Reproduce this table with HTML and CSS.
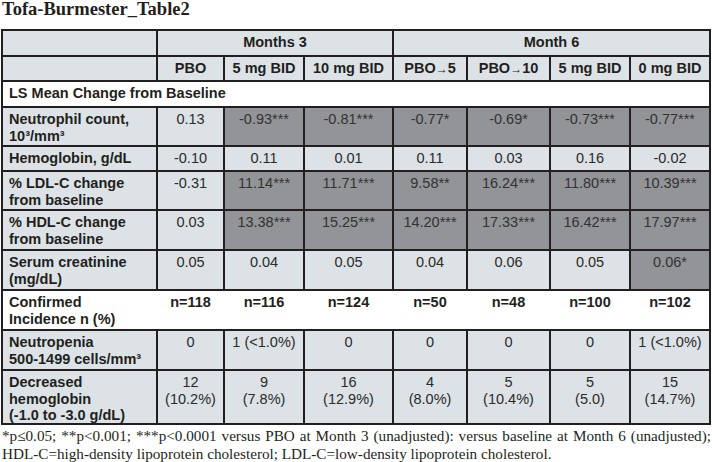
FILE: index.html
```html
<!DOCTYPE html>
<html lang="en">
<head>
<meta charset="utf-8">
<title>Tofa-Burmester_Table2</title>
<link rel="stylesheet" href="styles.css">
</head>
<body>
<div class="page">
  <h1 class="title">Tofa-Burmester_Table2</h1>
  <div class="table">
    <div class="cell hd"></div>
    <div class="cell hd span3">Months 3</div>
    <div class="cell hd span4">Month 6</div>

    <div class="cell hd"></div>
    <div class="cell hd">PBO</div>
    <div class="cell hd">5 mg BID</div>
    <div class="cell hd">10 mg BID</div>
    <div class="cell hd">PBO<span class="arr">→</span>5</div>
    <div class="cell hd">PBO<span class="arr">→</span>10</div>
    <div class="cell hd">5 mg BID</div>
    <div class="cell hd">0 mg BID</div>

    <div class="section">LS Mean Change from Baseline</div>

    <div class="cell lbl">Neutrophil count,<br>10³/mm³</div>
    <div class="cell">0.13</div>
    <div class="cell dk">-0.93***</div>
    <div class="cell dk">-0.81***</div>
    <div class="cell dk">-0.77*</div>
    <div class="cell dk">-0.69*</div>
    <div class="cell dk">-0.73***</div>
    <div class="cell dk">-0.77***</div>

    <div class="cell lbl">Hemoglobin, g/dL</div>
    <div class="cell">-0.10</div>
    <div class="cell">0.11</div>
    <div class="cell">0.01</div>
    <div class="cell">0.11</div>
    <div class="cell">0.03</div>
    <div class="cell">0.16</div>
    <div class="cell">-0.02</div>

    <div class="cell lbl">% LDL-C change<br>from baseline</div>
    <div class="cell">-0.31</div>
    <div class="cell dk">11.14***</div>
    <div class="cell dk">11.71***</div>
    <div class="cell dk">9.58**</div>
    <div class="cell dk">16.24***</div>
    <div class="cell dk">11.80***</div>
    <div class="cell dk">10.39***</div>

    <div class="cell lbl">% HDL-C change<br>from baseline</div>
    <div class="cell">0.03</div>
    <div class="cell dk">13.38***</div>
    <div class="cell dk">15.25***</div>
    <div class="cell dk">14.20***</div>
    <div class="cell dk">17.33***</div>
    <div class="cell dk">16.42***</div>
    <div class="cell dk">17.97***</div>

    <div class="cell lbl">Serum creatinine<br>(mg/dL)</div>
    <div class="cell">0.05</div>
    <div class="cell">0.04</div>
    <div class="cell">0.05</div>
    <div class="cell">0.04</div>
    <div class="cell">0.06</div>
    <div class="cell">0.05</div>
    <div class="cell dk">0.06*</div>

    <div class="incidence">
      <div class="icell lbl">Confirmed<br>Incidence n (%)</div>
      <div class="icell">n=118</div>
      <div class="icell">n=116</div>
      <div class="icell">n=124</div>
      <div class="icell">n=50</div>
      <div class="icell">n=48</div>
      <div class="icell">n=100</div>
      <div class="icell">n=102</div>
    </div>

    <div class="cell lbl">Neutropenia<br>500-1499 cells/mm³</div>
    <div class="cell">0</div>
    <div class="cell">1 (&lt;1.0%)</div>
    <div class="cell">0</div>
    <div class="cell">0</div>
    <div class="cell">0</div>
    <div class="cell">0</div>
    <div class="cell">1 (&lt;1.0%)</div>

    <div class="cell lbl">Decreased<br>hemoglobin<br>(-1.0 to -3.0 g/dL)</div>
    <div class="cell">12<br>(10.2%)</div>
    <div class="cell">9<br>(7.8%)</div>
    <div class="cell">16<br>(12.9%)</div>
    <div class="cell">4<br>(8.0%)</div>
    <div class="cell">5<br>(10.4%)</div>
    <div class="cell">5<br>(5.0)</div>
    <div class="cell">15<br>(14.7%)</div>
  </div>
  <p class="note">*p≤0.05; **p&lt;0.001; ***p&lt;0.0001 versus PBO at Month 3 (unadjusted): versus baseline at Month 6 (unadjusted); HDL-C=high-density lipoprotein cholesterol; LDL-C=low-density lipoprotein cholesterol.</p>
</div>
</body>
</html>
```

FILE: styles.css
```css
html, body {
  margin: 0;
  padding: 0;
  background: #ffffff;
}

.page {
  padding: 0 1px;
  width: 710px;
}

.title {
  margin: 0 0 11px 1px;
  font-family: "Liberation Serif", "Times New Roman", serif;
  font-weight: bold;
  font-size: 18.5px;
  line-height: 18px;
  color: #231f20;
}

.table {
  display: grid;
  grid-template-columns: 153px 65px 78px 87px 72px 81px 78px 78px;
  grid-template-rows: 24px 23px 24px 37px 23px 37px 38px 38px 38px 38px 52px;
  gap: 2px;
  padding: 2px;
  background: #231f20;
  font-family: "Liberation Sans", Arial, sans-serif;
  font-size: 14.5px;
  line-height: 16.5px;
  color: #2b2b2b;
}

.cell {
  background: #dce2e5;
  padding: 3px 2px 0;
  text-align: center;
  white-space: nowrap;
}

.cell.hd {
  font-weight: bold;
  color: #231f20;
}

.cell.lbl {
  text-align: left;
  padding-left: 6px;
  font-weight: bold;
  color: #231f20;
}

.cell.dk {
  background: #929497;
  color: #333333;
}

.span3 {
  grid-column: span 3;
}

.span4 {
  grid-column: span 4;
}

.arr {
  font-weight: normal;
  font-size: 12px;
}

.section {
  grid-column: 1 / -1;
  background: #ffffff;
  padding: 3px 6px 0;
  font-weight: bold;
  color: #231f20;
}

.incidence {
  grid-column: 1 / -1;
  display: grid;
  grid-template-columns: 153px 65px 78px 87px 72px 81px 78px 78px;
  column-gap: 2px;
  background: #ffffff;
  font-weight: bold;
  color: #231f20;
}

.icell {
  padding: 3px 2px 0;
  text-align: center;
  white-space: nowrap;
}

.icell.lbl {
  text-align: left;
  padding-left: 6px;
}

.note {
  margin: 2px 0 0 1px;
  font-family: "Liberation Serif", "Times New Roman", serif;
  font-size: 15.2px;
  line-height: 18px;
  color: #231f20;
  text-align: justify;
}
```
